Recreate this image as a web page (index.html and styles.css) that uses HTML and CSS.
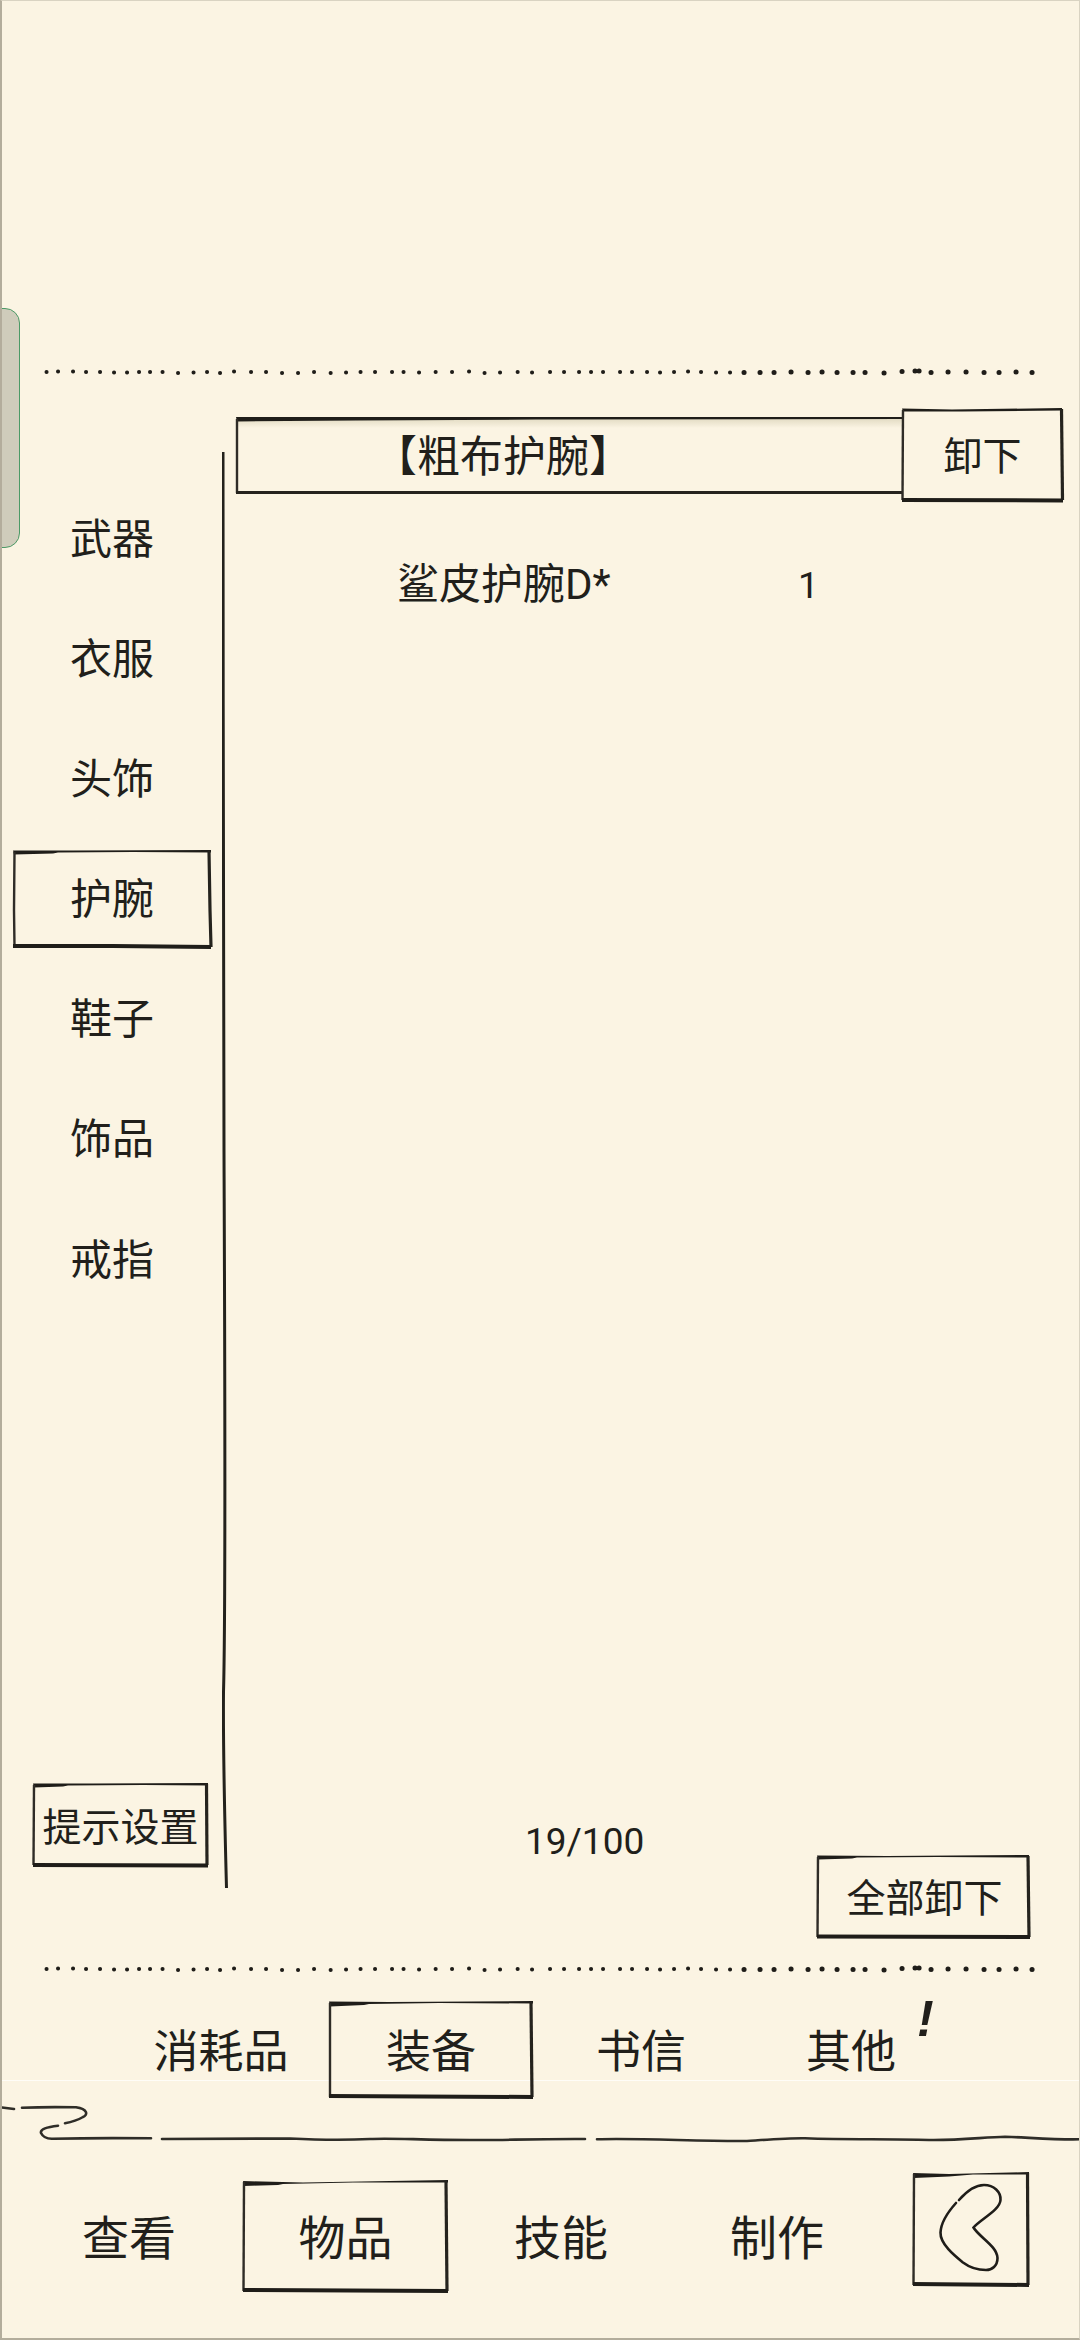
FILE: index.html
```html
<!DOCTYPE html>
<html lang="zh-CN">
<head>
<meta charset="utf-8">
<title>物品</title>
<link rel="stylesheet" href="styles.css">
</head>
<body>
<svg class="defs" width="0" height="0" aria-hidden="true">
  <symbol id="dots" viewBox="0 0 1080 10">
    <path class="dots-a" d="M46.5 5h.1M58 4.5h.1M73 4.5h.1M86 5h.1M100 5h.1M114 5.5h.1M127 5.5h.1M139 5h.1M150 5h.1M162.5 5h.1M178 6h.1M193.5 5.5h.1M207 5h.1M220 6h.1M234 4.5h.1M251 5h.1M266 5h.1M282 6h.1M298 6h.1M314 5h.1M330.6 6h.1M346 5.5h.1M360.5 5h.1M375 5h.1M392 5h.1M403.5 5h.1M419 5.5h.1M435.6 5h.1M452 5h.1M469 4.5h.1M484.5 6h.1M500 5.5h.1M517.6 5h.1M532 5.5h.1M550 5h.1M564 5h.1M579 5h.1M591 5h.1M603 5h.1M620 5h.1M632 5h.1M647 5h.1M660 5.5h.1M674 5h.1M688 4.5h.1M701 5h.1M716 5.5h.1M730 5.5h.1"/>
    <path class="dots-b" d="M744 5.5h.1M760 5.5h.1M774 5.5h.1M791 5h.1M808 5.5h.1M822 5h.1M837 5.5h.1M853 5.5h.1M865 5.5h.1M884 6h.1M902 4.5h.1M915 4h.1M919 4h.1M931 5.5h.1M948 5h.1M966 5h.1M984 5.5h.1M999 5.5h.1M1016 5h.1M1032 5.5h.1"/>
  </symbol>
</svg>

<div class="screen">
  <div class="side-tab"></div>

  <div class="top-space"></div>
  <svg class="rule" viewBox="0 0 1080 10"><use href="#dots"/></svg>

  <main class="main">
    <aside class="sidebar">
      <nav class="categories">
        <div class="cat">武器</div>
        <div class="cat">衣服</div>
        <div class="cat">头饰</div>
        <div class="cat cat-on">
          <svg class="frame" viewBox="0 0 198 98"><path class="wedge" d="M0 0.5L60 0.5L198 0L198 2.5L120 2L45 2.5L40 3.5L1 4.5Z"/><path class="thin" d="M1.5 2L1 60L1.5 97"/><path class="thin-dark" d="M196 1L197 60L198 97"/><path class="thick" d="M0 96L100 96L198 97"/></svg>
          护腕
        </div>
        <div class="cat">鞋子</div>
        <div class="cat">饰品</div>
        <div class="cat">戒指</div>
      </nav>
      <div class="hint-btn">
        <svg class="frame" viewBox="0 0 175 83"><path class="wedge" d="M0 0.5L60 0.5L175 0L175 2.5L110 2L35 2.5L30 3.5L1 4.5Z"/><path class="thin" d="M1 2L0.5 82"/><path class="thin-dark" d="M173.5 1L174 82"/><path class="thick" d="M0 82L175 82.5"/></svg>
        提示设置
      </div>
    </aside>

    <svg class="divider" viewBox="0 0 14 1436"><path d="M1 0C1 240 1.5 420 2 700C3 950 4 1150 1.5 1240C1 1300 3 1380 4.5 1436"/></svg>

    <section class="content">
      <header class="head">
        <div class="title-bar">
          <svg class="frame" viewBox="0 0 666 76"><path class="wedge" d="M0 0L120 0L666 0L666 2L300 2.5L120 3.5L1 4.5Z"/><path class="thin" d="M1 2L1 76"/><path class="thick-2" d="M0 75.5L666 75.5"/></svg>
          【粗布护腕】
        </div>
        <div class="unload-btn">
          <svg class="frame" viewBox="0 0 161 93"><path class="wedge" d="M0 0.5L50 1.5L160 0L160 2.5L60 3.5L1 3.5Z"/><path class="thin" d="M1 2L0.5 92"/><path class="thin-dark" d="M159.5 1L160.5 92"/><path class="thick" d="M0 92L161 92.5"/></svg>
          卸下
        </div>
      </header>

      <ul class="items">
        <li class="item"><span class="item-name">鲨皮护腕D*</span><span class="item-qty">1</span></li>
      </ul>

      <footer class="foot">
        <div class="capacity">19/100</div>
        <div class="unload-all">
          <svg class="frame" viewBox="0 0 213 83"><path class="wedge" d="M0 0.5L70 1L212 0L212 2.5L120 2L40 2.5L35 3.5L1 4.5Z"/><path class="thin" d="M1 2L0.5 82"/><path class="thin-dark" d="M211 1L212 82"/><path class="thick" d="M0 81.5L213 82"/></svg>
          全部卸下
        </div>
      </footer>
    </section>
  </main>

  <svg class="rule" viewBox="0 0 1080 10"><use href="#dots"/></svg>

  <div class="subtabs">
    <div class="subtab">消耗品</div>
    <div class="subtab subtab-on">
      <svg class="frame" viewBox="0 0 204 97"><path class="wedge" d="M0 0.5L60 1L204 0L204 2.5L110 2L40 3L35 4L1 5.5Z"/><path class="thin" d="M1 2L1 96"/><path class="thin-dark" d="M202 1L203 96"/><path class="thick" d="M0 95L204 96"/></svg>
      装备
    </div>
    <div class="subtab">书信</div>
    <div class="subtab">其他<span class="alert">!</span></div>
  </div>

  <div class="bottom">
    <svg class="wave" viewBox="0 0 1080 50"><path d="M0 7.3L14 9M22 7.7C40 7 60 7 76 7.3C88 9 88 15 83 17C78 20 72 22 65 23.3M58 25.7C47 27 40 29 41 33C43 37 48 39 53 38.7C85 38 120 38 151 38.3M162 39C220 38.5 270 38.5 290 38.5C320 40 340 40.5 370 39C390 37.7 420 40 470 40C500 40.5 530 38.7 585 39M597 39.3C640 38 700 41.5 747 41C770 39.5 790 38 805 38.3C850 40 890 38.5 929 40C960 40.5 985 37 1005 36.7C1035 38 1060 40 1080 39.3"/></svg>
    <nav class="nav">
      <div class="nav-item">查看</div>
      <div class="nav-item nav-on">
        <svg class="frame" viewBox="0 0 205 112"><path class="wedge" d="M0 1L60 2.5L205 0L205 2.5L110 2.5L40 4L35 5L1 6Z"/><path class="thin" d="M1 2L0.5 111"/><path class="thin-dark" d="M203 1L204 111"/><path class="thick" d="M0 110L205 111"/></svg>
        物品
      </div>
      <div class="nav-item">技能</div>
      <div class="nav-item">制作</div>
      <div class="back-btn">
        <svg class="frame" viewBox="0 0 116 114"><path class="wedge" d="M0 1L36 2L116 0L116 2.5L60 2.5L36 4.5L1 6Z"/><path class="thin" d="M1 2L0.5 113"/><path class="thin-dark" d="M114.5 1L115 113"/><path class="thick" d="M0 112L116 113"/><path class="heart" d="M46 28C53 20 62 13 71 13C81 13 88 20 87.5 28C87 38 68 47 60.5 55.5C66 65 84 74 84.5 86C84.5 94 79 98 73 98C63 98 56 95 50 90.5C42 84 27 72 27.5 60.5C28 50 34 41 43 31"/></svg>
      </div>
    </nav>
  </div>
</div>
</body>
</html>
```
FILE: styles.css
```css
* { box-sizing: border-box; }
html, body { margin: 0; padding: 0; background: #fbf4e3; }
body {
  width: 1080px;
  height: 2340px;
  overflow: hidden;
  font-family: "Noto Sans CJK SC", Roboto, sans-serif;
  color: #211f1b;
}
.defs { position: absolute; }
.dots-a, .dots-b { fill: none; stroke: #1f1d19; stroke-linecap: round; stroke-width: 4; }
.dots-b { stroke-width: 5; }

.screen {
  position: relative;
  width: 1080px;
  height: 2340px;
  display: flex;
  flex-direction: column;
  background: #fbf4e3;
}
.screen::after {
  content: "";
  position: absolute;
  inset: 0;
  border: 1px solid #d9d3c2;
  border-left: 2px solid #b3ad9c;
  border-bottom: 2px solid #b3ad9c;
  pointer-events: none;
}
.side-tab {
  position: absolute;
  left: -16px;
  top: 308px;
  width: 36px;
  height: 240px;
  background: #cfccbb;
  border: 1.5px solid #4c9a66;
  border-radius: 15px;
}
.top-space { height: 367px; flex: none; }
.rule { display: block; width: 1080px; height: 10px; flex: none; }

.main { display: flex; height: 1587px; flex: none; }

.sidebar {
  width: 222px;
  flex: none;
  display: flex;
  flex-direction: column;
  align-items: flex-start;
  padding: 112px 0 98px 13px;
}
.categories { display: flex; flex-direction: column; gap: 22.2px; }
.cat {
  position: relative;
  width: 198px;
  height: 98px;
  padding-bottom: 5px;
  display: flex;
  align-items: center;
  justify-content: center;
  font-size: 42px;
  line-height: 1;
}
.frame {
  position: absolute;
  left: 0;
  top: 0;
  width: 100%;
  height: 100%;
  overflow: visible;
  fill: none;
  filter: blur(0.4px);
}
.wedge { fill: #1f1d19; stroke: none; }
.thin { stroke: #2f2c27; stroke-width: 2.4; fill: none; }
.thin-dark { stroke: #25231e; stroke-width: 3.2; fill: none; }
.thick { stroke: #1f1d19; stroke-width: 4; fill: none; }
.thick-2 { stroke: #25231e; stroke-width: 3; fill: none; }
.heart { stroke: #1f1d19; stroke-width: 2.6; fill: none; stroke-linecap: round; }

.hint-btn {
  position: relative;
  margin-top: auto;
  margin-left: 20px;
  width: 175px;
  height: 83px;
  display: flex;
  align-items: center;
  justify-content: center;
  font-size: 39px;
  line-height: 1;
  white-space: nowrap;
}

.divider {
  width: 14px;
  height: 1436px;
  flex: none;
  margin-top: 75px;
  fill: none;
  stroke: #23211c;
  stroke-width: 3;
  filter: blur(0.4px);
}

.content {
  width: 844px;
  flex: none;
  display: flex;
  flex-direction: column;
  padding-top: 31px;
}
.head { display: flex; align-items: center; }
.title-bar {
  position: relative;
  width: 666px;
  height: 76px;
  padding-bottom: 2px;
  flex: none;
  display: flex;
  align-items: center;
  padding-left: 138px;
  font-size: 43px;
  line-height: 1;
  background: linear-gradient(#e3dcc4, rgba(251, 244, 227, 0)) 0 2px / 100% 9px no-repeat;
}
.unload-btn {
  position: relative;
  width: 161px;
  height: 93px;
  padding-bottom: 2px;
  flex: none;
  display: flex;
  align-items: center;
  justify-content: center;
  font-size: 39px;
  line-height: 1;
}
.items { list-style: none; margin: 56px 0 0; padding: 0; flex: 1; }
.item { display: flex; align-items: center; height: 56px; padding-left: 161px; font-size: 42px; line-height: 1; }
.item-name { width: 401px; font-family: Roboto, "Noto Sans CJK SC", sans-serif; }
.item-qty { font-family: Roboto, sans-serif; font-size: 37px; }

.foot { display: flex; flex-direction: column; align-items: flex-start; flex: none; margin-bottom: 26px; }
.capacity {
  margin-left: 289px;
  font-family: Roboto, sans-serif;
  font-size: 37px;
  line-height: 44px;
}
.unload-all {
  position: relative;
  margin: -9px 0 0 581px;
  width: 213px;
  height: 83px;
  padding: 0 0 2px 2px;
  display: flex;
  align-items: center;
  justify-content: center;
  font-size: 39px;
  line-height: 1;
}

.subtabs {
  display: grid;
  grid-template-columns: repeat(4, 210px);
  padding-left: 116px;
  height: 106px;
  flex: none;
  position: relative;
  z-index: 1;
}
.subtab {
  position: relative;
  height: 97px;
  margin-top: 27px;
  padding-bottom: 2px;
  display: flex;
  align-items: center;
  justify-content: center;
  font-size: 45px;
  line-height: 1;
}
.subtab-on { width: 204px; margin-left: 3px; }
.alert {
  position: absolute;
  left: 171px;
  top: -7px;
  font-family: "Liberation Sans", sans-serif;
  font-style: italic;
  font-weight: 700;
  font-size: 50px;
  line-height: 1;
}

.bottom {
  flex: 1;
  border-top: 1.5px solid #fffdf7;
  display: flex;
  flex-direction: column;
}
.wave {
  display: block;
  width: 1080px;
  height: 50px;
  flex: none;
  margin-top: 18.5px;
  fill: none;
  stroke: #2f2d28;
  stroke-width: 2.6;
  stroke-linecap: round;
  filter: blur(0.4px);
}
.nav {
  display: grid;
  grid-template-columns: repeat(4, 216px) 116px;
  padding-left: 21px;
  align-items: center;
  height: 172px;
}
.nav-item {
  position: relative;
  height: 112px;
  padding-bottom: 3px;
  display: flex;
  align-items: center;
  justify-content: center;
  font-size: 47px;
  line-height: 1;
}
.nav-on { width: 205px; margin-left: 6px; }
.back-btn {
  position: relative;
  width: 116px;
  height: 114px;
  margin-left: 28px;
  margin-bottom: 13px;
}
```
